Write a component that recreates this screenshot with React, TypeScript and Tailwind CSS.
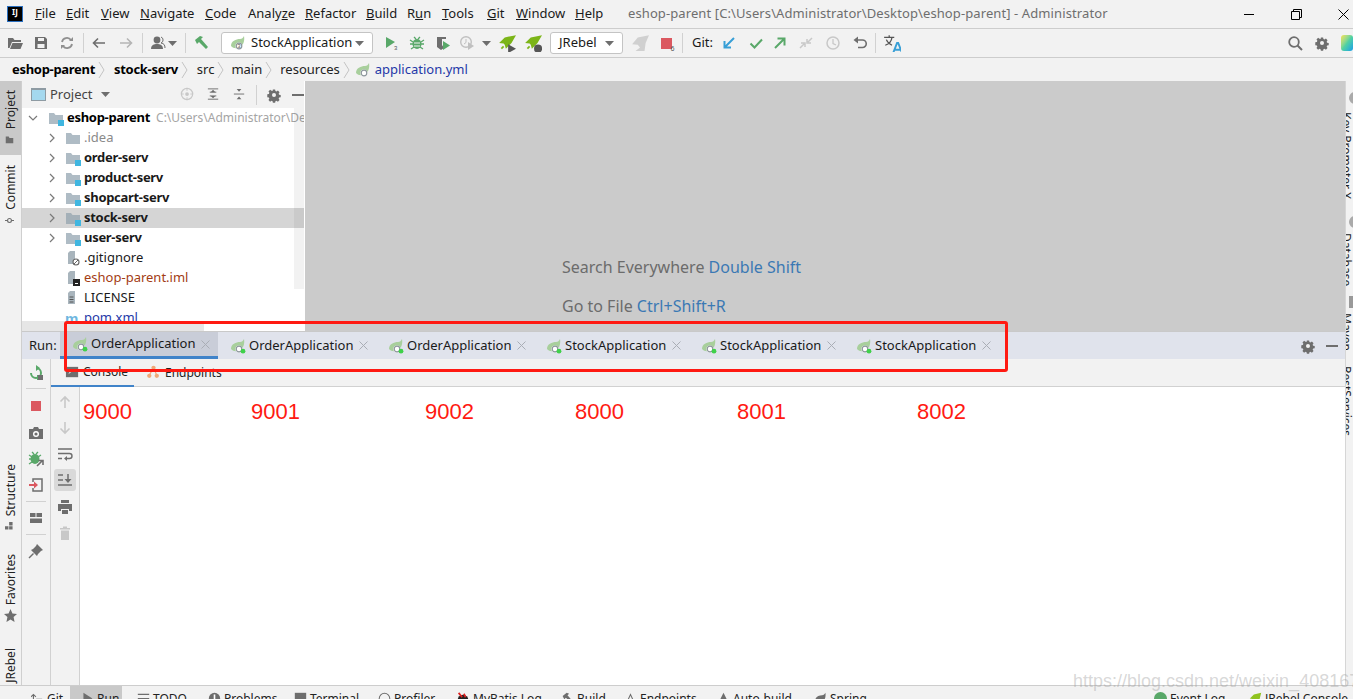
import type { ReactNode } from 'react';

const GRAY = '#6e6e6e';
const GREEN = '#59a869';
const BLUE = '#389fd6';
const RED = '#db5860';

function Ico({ size = 16, children }: { size?: number; children: ReactNode }) {
  return (
    <svg width={size} height={size} viewBox="0 0 16 16" className="shrink-0">
      {children}
    </svg>
  );
}

function Slot({ className = '', children }: { className?: string; children: ReactNode }) {
  return <div className={`w-[26px] h-[26px] flex items-center justify-center shrink-0 ${className}`}>{children}</div>;
}

function Sep({ className = '' }: { className?: string }) {
  return <div className={`w-px h-[20px] bg-[#d1d1d1] shrink-0 ${className}`} />;
}

function Caret({ className = '' }: { className?: string }) {
  return (
    <svg width="9" height="5" viewBox="0 0 9 5" className={`shrink-0 ${className}`}>
      <path d="M0 0h9L4.5 5z" fill={GRAY} />
    </svg>
  );
}

function Leaf({ dot, badge, size = 16 }: { dot?: boolean; badge?: string; size?: number }) {
  return (
    <Ico size={size}>
      <path d="M1 11C1 6 6 4 10 4c2 0 3-1 4-3 1 5-1 11-6 12-3 .6-5 0-7-2z" fill="#a8cf9c" />
      <circle cx="9" cy="11" r="3.6" fill="#fff" />
      <circle cx="9" cy="11" r="2.8" fill="none" stroke="#8d969c" strokeWidth="1.2" />
      {dot && <circle cx="13" cy="13.2" r="2.4" fill="#3fd14a" />}
      {badge && (
        <text x="9" y="13" fontSize="6" textAnchor="middle" fill="#555" fontFamily="Liberation Sans">
          {badge}
        </text>
      )}
    </Ico>
  );
}

function Rocket({ tail }: { tail?: 'run' | 'bug' }) {
  return (
    <Ico size={18}>
      <path d="M16 1L6 3 1 8l4 .5 1 1L7 13l5-5z" fill="#7cb518" />
      <path d="M3 13l2-2" stroke="#7cb518" strokeWidth="1.5" />
      {tail === 'run' && <path d="M9 9l7 4-7 4z" fill="#555" />}
      {tail === 'bug' && <circle cx="12.5" cy="13" r="3.6" fill="#555" />}
    </Ico>
  );
}

function Gear({ size = 16 }: { size?: number }) {
  return (
    <Ico size={size}>
      <path
        d="M6.6 1h2.8l.4 2 1.3.6 1.8-1.1 2 2-1.1 1.8.6 1.3 2 .4v2.8l-2 .4-.6 1.3 1.1 1.8-2 2-1.8-1.1-1.3.6-.4 2H6.6l-.4-2-1.3-.6-1.8 1.1-2-2 1.1-1.8-.6-1.3-2-.4V7l2-.4.6-1.3L1.1 3.5l2-2 1.8 1.1L6.2 3z"
        transform="translate(1.6 1.6) scale(.8)"
        fill={GRAY}
      />
      <circle cx="8" cy="8" r="2" fill="#f2f2f2" />
    </Ico>
  );
}

function Folder({ module, dark }: { module?: boolean; dark?: boolean }) {
  return (
    <Ico>
      <path d="M1 3h5l1.5 2H15v9H1z" fill={dark ? '#a4b0b8' : '#afbcc5'} />
      {module && <rect x="10" y="10" width="6" height="6" fill="#40b6e0" />}
    </Ico>
  );
}

function FileIco({ kind }: { kind: 'ignore' | 'iml' | 'text' }) {
  return (
    <Ico>
      <path d="M5 1h5v13H3V3z" fill="#a9b5bd" />
      {kind === 'ignore' && <circle cx="11" cy="12" r="3" fill="#fff" stroke="#666" strokeWidth="1.1" />}
      {kind === 'ignore' && <path d="M9 14l4-4" stroke="#666" />}
      {kind === 'iml' && <rect x="8" y="9" width="7" height="7" fill="#222" />}
      {kind === 'iml' && <rect x="10" y="13" width="3" height="1" fill="#fff" />}
      {kind === 'text' && <path d="M4.5 7h4M4.5 9.5h4M4.5 12h4" stroke="#555" />}
    </Ico>
  );
}

function Chevron({ open }: { open?: boolean }) {
  return (
    <svg width="10" height="10" viewBox="0 0 10 10" className="shrink-0">
      <path d={open ? 'M1 3l4 4 4-4' : 'M3 1l4 4-4 4'} fill="none" stroke="#7a7a7a" strokeWidth="1.2" />
    </svg>
  );
}

function Crumb({ children, className = '', sep = true }: { children: ReactNode; className?: string; sep?: boolean }) {
  return (
    <>
      <span className={className}>{children}</span>
      {sep && (
        <svg width="7" height="20" viewBox="0 0 7 20" className="shrink-0">
          <path d="M1 2l5 8-5 8" fill="none" stroke="#c4c4c4" />
        </svg>
      )}
    </>
  );
}

function VText({ children, className = '' }: { children: ReactNode; className?: string }) {
  return <span className={`[writing-mode:vertical-rl] rotate-180 text-[12px] leading-[14px] text-[#222] ${className}`}>{children}</span>;
}

const menus: [string, number, string][] = [
  ['File', 0, 'w-[31px]'],
  ['Edit', 0, 'w-[35px]'],
  ['View', 0, 'w-[39px]'],
  ['Navigate', 0, 'w-[65px]'],
  ['Code', 0, 'w-[43px]'],
  ['Analyze', 5, 'w-[57px]'],
  ['Refactor', 0, 'w-[61px]'],
  ['Build', 0, 'w-[41px]'],
  ['Run', 1, 'w-[35px]'],
  ['Tools', 0, 'w-[45px]'],
  ['Git', 0, 'w-[29px]'],
  ['Window', 0, 'w-[59px]'],
  ['Help', 0, 'w-[50px]'],
];

function TitleBar() {
  return (
    <div className="h-[29px] shrink-0 flex items-center border-b border-[#cdcdcd] bg-[#f2f2f2] text-[13px] text-[#1a1a1a]">
      <div className="ml-[7px] mr-[12px] w-[16px] h-[16px] bg-black border border-[#2a6fc0] flex items-start justify-center shrink-0">
        <span className="text-white text-[8px] leading-[10px] font-bold">IJ</span>
      </div>
      {menus.map(([label, idx, w]) => (
        <span key={label} className={`${w} shrink-0`}>
          {label.slice(0, idx)}
          <span className="underline">{label[idx]}</span>
          {label.slice(idx + 1)}
        </span>
      ))}
      <span className="ml-[3px] text-[#6e6e6e] tracking-[0.1px] whitespace-nowrap">
        eshop-parent [C:\Users\Administrator\Desktop\eshop-parent] - Administrator
      </span>
      <div className="ml-auto flex items-center">
        <div className="w-[10px] h-px bg-black mr-[37px]" />
        <svg width="11" height="11" viewBox="0 0 11 11" className="mr-[36px]">
          <path d="M.5 2.5h8v8h-8zM2.5 2.5v-2h8v8h-2" fill="none" stroke="#000" />
        </svg>
        <svg width="11" height="11" viewBox="0 0 11 11" className="mr-[4px]">
          <path d="M.5.5l10 10M10.5.5l-10 10" stroke="#000" />
        </svg>
      </div>
    </div>
  );
}

function Toolbar() {
  return (
    <div className="h-[29px] shrink-0 flex items-center pl-[2px] border-b border-[#cdcdcd] bg-[#f2f2f2] text-[13px] text-[#1a1a1a] overflow-hidden">
      <Slot><Ico><path d="M1 3h5l1.5 2H14v2H5L2.5 13H1zM5.5 8H16l-2.5 6H3z" fill={GRAY} /></Ico></Slot>
      <Slot><Ico><path d="M2 2h10l2 2v10H2zM5 3v3h6V3zM4.5 9v4h7V9z" fill={GRAY} fillRule="evenodd" /></Ico></Slot>
      <Slot><Ico><path d="M3 7a5 5 0 0 1 9-2M13 9a5 5 0 0 1-9 2" fill="none" stroke="#8f8f8f" strokeWidth="1.8" /><path d="M14 2v4h-4zM2 14v-4h4z" fill="#8f8f8f" /></Ico></Slot>
      <Sep className="ml-[3px]" />
      <Slot className="ml-[2px]"><Ico><path d="M14 8H3M7 3.5L2.5 8 7 12.5" fill="none" stroke={GRAY} strokeWidth="1.6" /></Ico></Slot>
      <Slot className="ml-px"><Ico><path d="M2 8h11M9 3.5L13.5 8 9 12.5" fill="none" stroke="#b5b5b5" strokeWidth="1.6" /></Ico></Slot>
      <Sep className="ml-[3px]" />
      <Slot className="ml-[2px]"><Ico><circle cx="7" cy="5" r="3.4" fill={GRAY} /><path d="M1 14c0-4 3-5 6-5s6 1 6 5z" fill={GRAY} /><path d="M11 2a3.2 3.2 0 0 1 0 6c3 .5 4 2 4 5" fill="none" stroke={GRAY} /></Ico></Slot>
      <Caret className="-ml-[3px]" />
      <Sep className="ml-[8px]" />
      <Slot className="ml-[2px]"><Ico><path d="M2 5l5-4 3 1-2 2 7 8-2 2-7-7-2 2z" fill={GREEN} /></Ico></Slot>
      <div className="ml-[7px] w-[152px] h-[22px] shrink-0 bg-white border border-[#c4c4c4] rounded-[3px] flex items-center pl-[8px]">
        <Leaf badge="3" />
        <span className="ml-[5px] whitespace-nowrap">StockApplication</span>
        <Caret className="ml-auto mr-[8px]" />
      </div>
      <Slot className="ml-[5px]"><Ico><path d="M3 2l9 5-9 6z" fill={GREEN} /><text x="11" y="15" fontSize="6" fill="#555" fontFamily="Liberation Sans">3</text></Ico></Slot>
      <Slot><Ico><ellipse cx="8" cy="9" rx="4.5" ry="5" fill={GREEN} /><path d="M1 5l3 2M15 5l-3 2M1 9h3M15 9h-3M2 14l3-2M14 14l-3-2M5 2l2 2M11 2L9 4" stroke={GREEN} strokeWidth="1.3" /><path d="M5 8h6M5 11h6" stroke="#f2f2f2" /></Ico></Slot>
      <Slot><Ico><path d="M2 2h9v2H7v6l2 3-3 2-4-3z" fill={GRAY} /><path d="M8 6l7 4.5L8 15z" fill={GREEN} /></Ico></Slot>
      <Slot className="-ml-[2px]"><Ico><circle cx="7" cy="7" r="5.3" fill="none" stroke="#c0c0c0" strokeWidth="1.4" /><path d="M7 4v3.5L5 9" fill="none" stroke="#c0c0c0" /><path d="M9 7l6 4-6 4z" fill="#c0c0c0" /></Ico></Slot>
      <Caret className="ml-[2px]" />
      <Slot className="ml-[3px]"><Rocket tail="run" /></Slot>
      <Slot><Rocket tail="bug" /></Slot>
      <div className="ml-[4px] w-[73px] h-[22px] shrink-0 bg-white border border-[#c4c4c4] rounded-[3px] flex items-center pl-[8px]">
        <span>JRebel</span>
        <Caret className="ml-auto mr-[8px]" />
      </div>
      <Slot className="ml-[4px]"><Ico size={18}><path d="M16 1L6 3 1 9l5 .5L8 12l-4 3h8l1-7z" fill="#d0d0d0" /></Ico></Slot>
      <Slot><div className="relative w-[11px] h-[11px] bg-[#db5860]"><span className="absolute -right-[3px] -bottom-[3px] text-[7px] leading-[7px] text-[#555]">6</span></div></Slot>
      <Sep className="ml-[3px]" />
      <span className="ml-[9px] w-[21px] shrink-0">Git:</span>
      <Slot className="ml-[3px]"><Ico><path d="M13 3L4 12M3.5 6v6.5H10" fill="none" stroke={BLUE} strokeWidth="2" /></Ico></Slot>
      <Slot className="ml-px"><Ico><path d="M2.5 8.5L6.5 12.5 14 4.5" fill="none" stroke={GREEN} strokeWidth="2" /></Ico></Slot>
      <Slot className="-ml-[2px]"><Ico><path d="M3 13l9-9M5.5 3.5H12.5V10.5" fill="none" stroke={GREEN} strokeWidth="2" /></Ico></Slot>
      <Slot><Ico><path d="M2 13l4-4M3 8h4v4M14 3l-4 4M9 4v4h4" fill="none" stroke="#c8c8c8" strokeWidth="1.5" /></Ico></Slot>
      <Slot className="ml-px"><Ico><circle cx="8" cy="8" r="6" fill="none" stroke="#c8c8c8" strokeWidth="1.5" /><path d="M8 4v4.5l3 1.5" fill="none" stroke="#c8c8c8" strokeWidth="1.3" /></Ico></Slot>
      <Slot className="ml-px"><Ico><path d="M5 5h5.5a3.5 3.5 0 0 1 0 7.5H6" fill="none" stroke={GRAY} strokeWidth="1.6" /><path d="M6 1.5v7L1.5 5z" fill={GRAY} /></Ico></Slot>
      <Sep className="ml-[2px]" />
      <Slot className="ml-[3px]"><Ico size={18}><path d="M1 3h9M5.5 1v2M8 3c-.5 4-3 6-6 7M3 5c1 3 3 4 5 5" fill="none" stroke="#555" strokeWidth="1.1" /><path d="M9 17l3.5-9h1l3.5 9M10.5 14h5" fill="none" stroke="#389fd6" strokeWidth="1.7" /></Ico></Slot>
      <Slot className="ml-auto"><Ico><circle cx="7" cy="7" r="4.8" fill="none" stroke={GRAY} strokeWidth="1.8" /><path d="M10.5 10.5L15 15" stroke={GRAY} strokeWidth="2" /></Ico></Slot>
      <Slot className="ml-px"><Gear /></Slot>
      <div className="ml-[6px] w-[12px] h-[16px] rounded-[3px] bg-gradient-to-br from-[#f4e24a] via-[#52d2a0] to-[#1e9be8] shrink-0" />
    </div>
  );
}

function Breadcrumb() {
  return (
    <div className="h-[23px] shrink-0 flex items-center gap-[3px] pl-[12px] bg-[#f2f2f2] text-[13px] text-[#222] whitespace-nowrap">
      <Crumb className="font-bold text-black tracking-[-0.3px]">eshop-parent</Crumb>
      <Crumb className="ml-[6px] font-bold text-black tracking-[-0.3px]">stock-serv</Crumb>
      <Crumb className="ml-[6px]">src</Crumb>
      <Crumb className="ml-[4px]">main</Crumb>
      <Crumb className="ml-[5px]">resources</Crumb>
      <div className="ml-[2px]"><Leaf /></div>
      <span className="ml-px text-[#2438a8]">application.yml</span>
    </div>
  );
}

function Row({ indent, chevron, icon, selected, children }: { indent: string; chevron?: boolean; icon: ReactNode; selected?: boolean; children: ReactNode }) {
  return (
    <div className={`h-[20px] shrink-0 flex items-center whitespace-nowrap ${indent} ${selected ? 'bg-[#d5d5d5]' : ''}`}>
      <div className="w-[18px] shrink-0 flex justify-start">{chevron && <Chevron />}</div>
      {icon}
      <span className="ml-[3px]">{children}</span>
    </div>
  );
}

function ProjectPanel() {
  return (
    <div className="w-[283px] shrink-0 flex flex-col bg-white border-r border-transparent">
      <div className="h-[27px] shrink-0 bg-[#f2f2f2] flex items-center pl-[9px] text-[13px] text-[#444]">
        <div className="w-[15px] h-[13px] bg-[#a4d8ee] border border-[#8e9ba3] border-t-2 shrink-0" />
        <span className="ml-[4px]">Project</span>
        <Caret className="ml-[9px]" />
        <div className="ml-[70px]"><Ico size={15}><circle cx="7.5" cy="7.5" r="6" fill="none" stroke="#c8c8c8" strokeWidth="1.3" /><circle cx="7.5" cy="7.5" r="2" fill="#c8c8c8" /><path d="M7.5 1v3M7.5 11v3M1 7.5h3M11 7.5h3" stroke="#c8c8c8" /></Ico></div>
        <div className="ml-[11px]"><Ico size={15}><path d="M2 2h11M2 13h11M4 9.5h7M4 5.5h7" stroke={GRAY} /><path d="M7.5 3l2.5 2.5H5zM7.5 12L5 9.5h5z" fill={GRAY} /></Ico></div>
        <div className="ml-[11px]"><Ico size={15}><path d="M2 7.5h11" stroke={GRAY} /><path d="M5 2l2.5 3L10 2zM5 13l2.5-3 2.5 3z" fill={GRAY} /></Ico></div>
        <div className="ml-[9px] w-px h-[20px] bg-[#d1d1d1]" />
        <div className="ml-[9px]"><Gear /></div>
        <div className="ml-[10px] w-[12px] h-[2px] bg-[#6e6e6e]" />
      </div>
      <div className="relative flex-1 flex flex-col overflow-hidden text-[13px] text-[#1a1a1a]">
        <Row indent="pl-[8px]" icon={<Folder module />}>
          <span className="font-bold text-black tracking-[-0.3px]">eshop-parent</span>
          <span className="ml-[6px] text-[12px] text-[#a5a5a5]">C:\Users\Administrator\Desktop\eshop-parent</span>
        </Row>
        <div className="absolute left-[6px] top-[5px]"><Chevron open /></div>
        <Row indent="pl-[25px]" chevron icon={<Folder />}><span className="text-[#8a8a8a]">.idea</span></Row>
        <Row indent="pl-[25px]" chevron icon={<Folder module />}><b className="tracking-[-0.3px]">order-serv</b></Row>
        <Row indent="pl-[25px]" chevron icon={<Folder module />}><b className="tracking-[-0.3px]">product-serv</b></Row>
        <Row indent="pl-[25px]" chevron icon={<Folder module />}><b className="tracking-[-0.3px]">shopcart-serv</b></Row>
        <Row indent="pl-[25px]" chevron selected icon={<Folder module dark />}><b className="tracking-[-0.3px]">stock-serv</b></Row>
        <Row indent="pl-[25px]" chevron icon={<Folder module />}><b className="tracking-[-0.3px]">user-serv</b></Row>
        <Row indent="pl-[25px]" icon={<FileIco kind="ignore" />}>.gitignore</Row>
        <Row indent="pl-[25px]" icon={<FileIco kind="iml" />}><span className="text-[#a33c14]">eshop-parent.iml</span></Row>
        <Row indent="pl-[25px]" icon={<FileIco kind="text" />}>LICENSE</Row>
        <Row indent="pl-[25px]" icon={<Ico><text x="0" y="14" fontSize="15" fontWeight="700" fill="#6fb7e0" fontFamily="Liberation Sans">m</text></Ico>}><span className="text-[#2438a8]">pom.xml</span></Row>
        <div className="absolute right-0 top-0 w-[10px] h-[181px] bg-black/5" />
      </div>
      <div className="h-[10px] shrink-0 bg-white">
        <div className="w-[182px] h-full bg-[#e6e6e6]" />
      </div>
    </div>
  );
}

function Editor() {
  return (
    <div className="flex-1 bg-[#cbcbcb] pl-[257px] pt-[174px] text-[16px] leading-[24px] text-[#6c6c6c]">
      <p>Search Everywhere <span className="text-[#3b79b4]">Double Shift</span></p>
      <p className="mt-[15px]">Go to File <span className="text-[#3b79b4]">Ctrl+Shift+R</span></p>
    </div>
  );
}

const runTabs: [string, string, boolean][] = [
  ['OrderApplication', 'w-[158px] pl-[12px]', true],
  ['OrderApplication', 'w-[158px] pl-[12px]', false],
  ['OrderApplication', 'w-[158px] pl-[12px]', false],
  ['StockApplication', 'w-[155px] pl-[12px]', false],
  ['StockApplication', 'w-[155px] pl-[12px]', false],
  ['StockApplication', 'w-[155px] pl-[12px]', false],
];

function RunTabs() {
  return (
    <div className="h-[28px] shrink-0 flex items-stretch bg-[#e0e3ec] border-t border-[#c9c9c9] text-[13px] text-[#1a1a1a]">
      <span className="w-[38px] shrink-0 pl-[7px] self-center">Run:</span>
      {runTabs.map(([name, w, active], i) => (
        <div key={i} className={`${w} shrink-0 flex items-center whitespace-nowrap ${active ? 'bg-[#c9cdd8] border-b-[3px] border-[#4083c9]' : ''}`}>
          <Leaf dot />
          <span className="ml-[3px]">{name}</span>
          <svg width="9" height="9" viewBox="0 0 9 9" className="ml-[6px] shrink-0">
            <path d="M.5.5l8 8M8.5.5l-8 8" stroke="#a9adb5" />
          </svg>
        </div>
      ))}
      <div className="ml-auto flex items-center pr-[7px]">
        <Gear />
        <div className="ml-[10px] w-[12px] h-[2px] bg-[#6e6e6e]" />
      </div>
    </div>
  );
}

function SideButton({ children, className = '' }: { children: ReactNode; className?: string }) {
  return <div className={`h-[26px] w-full flex items-center justify-center shrink-0 ${className}`}>{children}</div>;
}

function RunActions() {
  return (
    <div className="w-[29px] shrink-0 flex flex-col items-center pt-[1px] border-r border-[#d1d1d1] bg-[#f2f2f2]">
      <SideButton><Ico><path d="M3 8a5 5 0 1 0 5-5" fill="none" stroke={GREEN} strokeWidth="2" /><path d="M8 0l4 3-4 3zM9 10h5v5H9z" fill={GREEN} /><rect x="10" y="10" width="5" height="5" fill={GRAY} /></Ico></SideButton>
      <div className="w-[20px] h-px bg-[#d1d1d1] my-[2px]" />
      <SideButton className="mt-[2px]"><div className="w-[10px] h-[10px] bg-[#db5860]" /></SideButton>
      <SideButton className="mt-px"><Ico><path d="M1 4h4l1-2h4l1 2h4v10H1z" fill={GRAY} /><circle cx="8" cy="9" r="3" fill="#fff" /><circle cx="8" cy="9" r="1.6" fill={GRAY} /></Ico></SideButton>
      <SideButton><Ico><ellipse cx="7" cy="8" rx="4.5" ry="5" fill={GREEN} /><path d="M1 4l3 2M13 4l-3 2M1 8h3M1 13l3-2M4 1l2 2M10 1L8 3" stroke={GREEN} strokeWidth="1.3" /><path d="M9 15l5-5M10.5 9.5H15V14" fill="none" stroke={GRAY} strokeWidth="1.6" /></Ico></SideButton>
      <SideButton><Ico><path d="M5 5V2h9v12H5v-3" fill="none" stroke={GRAY} strokeWidth="1.5" /><path d="M1 7.5h6M1 8.5h6" stroke={RED} strokeWidth="1.2" /><path d="M6 4.5L10 8l-4 3.5z" fill={RED} /></Ico></SideButton>
      <div className="w-[20px] h-px bg-[#d1d1d1] mt-[3px] mb-[3px]" />
      <SideButton><Ico><path d="M2 3h5.5v4H2zM8.5 3H14v4H8.5zM2 8.5h12V13H2z" fill={GRAY} /></Ico></SideButton>
      <div className="w-[20px] h-px bg-[#d1d1d1] mt-[3px] mb-[3px]" />
      <SideButton><Ico><path d="M9 1l6 6-2 1-3 3-1 2-6-6 2-1 3-3z" fill={GRAY} /><path d="M5.5 10.5L1 15" stroke={GRAY} strokeWidth="1.5" /></Ico></SideButton>
    </div>
  );
}

function ConsoleActions() {
  return (
    <div className="w-[29px] shrink-0 flex flex-col items-center pt-[2px] border-r border-[#d1d1d1] bg-[#f2f2f2]">
      <SideButton><Ico><path d="M8 14V3M3.5 7.5L8 3l4.5 4.5" fill="none" stroke="#c8c8c8" strokeWidth="1.6" /></Ico></SideButton>
      <SideButton><Ico><path d="M8 2v11M3.5 8.5L8 13l4.5-4.5" fill="none" stroke="#c8c8c8" strokeWidth="1.6" /></Ico></SideButton>
      <SideButton><Ico><path d="M1 3h14M1 7.5h11.5a2.5 2.5 0 0 1 0 5H9M1 12.5h4" fill="none" stroke={GRAY} strokeWidth="1.4" /><path d="M10 10v5l-3-2.5z" fill={GRAY} /></Ico></SideButton>
      <div className="w-[22px] h-[22px] my-[2px] shrink-0 rounded-[3px] bg-[#d9d9d9] flex items-center justify-center">
        <Ico><path d="M1 3h5M1 8h5M1 13h14M11 2v7" fill="none" stroke={GRAY} strokeWidth="1.5" /><path d="M7.5 7h7L11 11z" fill={GRAY} /></Ico>
      </div>
      <SideButton className="mt-[1px]"><Ico><path d="M4 1h8v3H4zM1 5h14v7h-3v-2H4v2H1z" fill={GRAY} /><path d="M5 11h6v4H5z" fill={GRAY} /></Ico></SideButton>
      <SideButton><Ico><path d="M3 3h10v1.5H3zM6 1.5h4V3H6zM4 5.5h8V15H4z" fill="#c8c8c8" /></Ico></SideButton>
    </div>
  );
}

function RunPanel() {
  return (
    <div className="flex-1 flex flex-col min-h-0">
      <RunTabs />
      <div className="flex-1 flex min-h-0">
        <RunActions />
        <div className="flex-1 flex flex-col min-w-0">
          <div className="h-[28px] shrink-0 flex items-stretch bg-[#f2f2f2] border-b border-[#d1d1d1] text-[12px] text-[#222]">
            <div className="w-[83px] shrink-0 pl-[14px] flex items-center gap-[3px] border-b-[2px] border-[#4083c9] -mb-px">
              <Ico size={15}><rect x="1" y="2" width="13" height="11" fill={GRAY} /><path d="M4 5l2.5 2L4 9" fill="none" stroke="#fff" /></Ico>
              <span>Console</span>
            </div>
            <div className="ml-[12px] flex items-center gap-[4px]">
              <Ico size={15}><circle cx="3.5" cy="11.5" r="2.3" fill="#f0a878" /><circle cx="11.5" cy="11.5" r="2.3" fill="#f0a878" /><circle cx="8" cy="3" r="2.3" fill="#f0a878" /><path d="M3.5 11L8 3l3.5 8" fill="none" stroke="#f0a878" strokeWidth="1.3" /></Ico>
              <span>Endpoints</span>
            </div>
          </div>
          <div className="flex-1 flex min-h-0">
            <ConsoleActions />
            <div className="flex-1 bg-white flex items-start pl-[3px] pt-[12px] font-['Liberation_Sans',sans-serif] text-[22px] leading-[26px] text-[#ff1a12]">
              <span className="w-[168px] shrink-0">9000</span>
              <span className="w-[174px] shrink-0">9001</span>
              <span className="w-[150px] shrink-0">9002</span>
              <span className="w-[162px] shrink-0">8000</span>
              <span className="w-[180px] shrink-0">8001</span>
              <span className="w-[60px] shrink-0">8002</span>
            </div>
          </div>
        </div>
      </div>
    </div>
  );
}

function LeftStrip() {
  return (
    <div className="w-[22px] shrink-0 flex flex-col items-center border-r border-[#cfcfcf] bg-[#f2f2f2]">
      <div className="w-full h-[74px] shrink-0 bg-[#c9c9c9] flex flex-col items-center pt-[9px] gap-[6px]">
        <VText>Project</VText>
        <Ico size={12}><path d="M1 2h4l1 2h5v7H1z" fill={GRAY} /></Ico>
      </div>
      <div className="mt-[10px] flex flex-col items-center gap-[6px]">
        <VText>Commit</VText>
        <Ico size={12}><circle cx="6" cy="6" r="2.6" fill="none" stroke={GRAY} strokeWidth="1.5" /><path d="M0 6h3M9 6h3" stroke={GRAY} strokeWidth="1.5" /></Ico>
      </div>
      <div className="mt-[236px] flex flex-col items-center gap-[6px]">
        <VText>Structure</VText>
        <Ico size={11}><path d="M0 6h5v5H0zM6 6h5v5H6zM6 0h5v5H6z" fill={GRAY} /></Ico>
      </div>
      <div className="mt-[21px] flex flex-col items-center gap-[4px]">
        <VText>Favorites</VText>
        <Ico size={13}><path d="M8 0l2.4 5.4 5.6.6-4.2 3.8L13 16l-5-3-5 3 1.200-6.200L0 6l5.600-.6z" fill={GRAY} /></Ico>
      </div>
      <div className="mt-[26px] flex flex-col items-center gap-[3px]">
        <VText>JRebel</VText>
        <Ico size={14}><path d="M15 1L6 3 1 8l3 .5L2 13l5-2 1 2 5-5z" fill="#8fc31f" /><circle cx="11" cy="12.500" r="2.500" fill="#333" /></Ico>
      </div>
    </div>
  );
}

function RightStrip() {
  return (
    <div className="w-[8px] shrink-0 overflow-hidden border-l border-[#d6d6d6] bg-[#f2f2f2] flex flex-col text-[#222] text-[12px] leading-[14px] pl-[3px] pt-[11px]">
      <div className="w-[12px] h-[12px] shrink-0 rounded-full bg-[#aaa]" />
      <span className="[writing-mode:vertical-rl] mt-[8px] whitespace-nowrap h-[95px] shrink-0">Key Promoter X</span>
      <div className="w-[12px] h-[12px] shrink-0 rounded-full bg-[#aaa] mt-[9px]" />
      <span className="[writing-mode:vertical-rl] mt-[5px] whitespace-nowrap h-[60px] shrink-0">Database</span>
      <div className="w-[12px] h-[12px] shrink-0 bg-[#999] mt-[3px]" />
      <span className="[writing-mode:vertical-rl] mt-[5px] whitespace-nowrap h-[50px] shrink-0">Maven</span>
      <span className="[writing-mode:vertical-rl] mt-[3px] whitespace-nowrap">RestServices</span>
    </div>
  );
}

const bottomItems: [string, string, ReactNode, string][] = [
  ['w-[46px]', 'w-[23px]', <Ico size={13}><path d="M3 15V3M0 6l3-3 3 3M7 15h6V9H7z" fill="none" stroke={GRAY} strokeWidth="1.4" /></Ico>, 'Git'],
  ['w-[52px]', 'w-[27px]', <Ico size={13}><path d="M3 1l11 7-11 7z" fill={GRAY} /></Ico>, 'Run'],
  ['w-[78px]', 'w-[31px]', <Ico size={13}><path d="M1 3h14M1 8h14M1 13h14" stroke={GRAY} strokeWidth="1.4" /></Ico>, 'TODO'],
  ['w-[90px]', 'w-[24px]', <Ico size={13}><circle cx="8" cy="8" r="7" fill={GRAY} /><path d="M8 3v6" stroke="#fff" strokeWidth="2" /></Ico>, 'Problems'],
  ['w-[82px]', 'w-[20px]', <Ico size={13}><rect x="1" y="1" width="14" height="14" fill={GRAY} /></Ico>, 'Terminal'],
  ['w-[83px]', 'w-[22px]', <Ico size={13}><circle cx="8" cy="8" r="6.500" fill="none" stroke={GRAY} strokeWidth="1.3" /></Ico>, 'Profiler'],
  ['w-[100px]', 'w-[18px]', <Ico size={14}><circle cx="8" cy="9" r="6" fill="#222" /><path d="M3 1l4 5M9 2l2 4" stroke="#d22" strokeWidth="2" /></Ico>, 'MyBatis Log'],
  ['w-[67px]', 'w-[22px]', <Ico size={13}><path d="M2 5l5-4 3 1-2 2 7 8-2 2-7-7-2 2z" fill={GRAY} /></Ico>, 'Build'],
  ['w-[90px]', 'w-[18px]', <Ico size={13}><path d="M3 14L8 3l5 11" fill="none" stroke={GRAY} strokeWidth="1.300" /></Ico>, 'Endpoints'],
  ['w-[98px]', 'w-[21px]', <Ico size={13}><path d="M8 1l7 14H1z" fill={GRAY} /></Ico>, 'Auto-build'],
  ['w-[340px]', 'w-[20px]', <Ico size={13}><path d="M1 12C1 6 6 4 10 4c2 0 3-1 4-3 1 5-1 11-6 12-3 .6-5 0-7-1z" fill={GRAY} /></Ico>, 'Spring'],
  ['w-[95px]', 'w-[20px]', <Ico size={13}><circle cx="8" cy="8" r="8" fill={GREEN} /></Ico>, 'Event Log'],
  ['w-[108px]', 'w-[20px]', <Ico size={13}><path d="M15 1L6 3 1 8l3 .5L2 14l5-2 1 2 5-5z" fill="#8fc31f" /></Ico>, 'JRebel Console'],
];

function BottomBar() {
  return (
    <div className="h-[14px] shrink-0 flex items-start pl-[24px] border-t border-[#cdcdcd] bg-[#f2f2f2] text-[12px] leading-[16px] text-[#222] whitespace-nowrap">
      {bottomItems.map(([w, slot, icon, label]) => (
        <div key={label} className={`${w} shrink-0 h-[26px] flex items-start pt-[5px] ${label === 'Run' ? 'bg-[#c9c9c9]' : ''}`}>
          <div className={`${slot} shrink-0 flex justify-end pr-[3px] pt-px`}>{icon}</div>
          <span>{label}</span>
        </div>
      ))}
    </div>
  );
}

export default function App() {
  return (
    <div className="relative w-[1353px] h-[699px] overflow-hidden flex flex-col bg-[#f2f2f2] font-['Noto_Sans',sans-serif]">
      <TitleBar />
      <Toolbar />
      <Breadcrumb />
      <div className="flex-1 flex min-h-0">
        <LeftStrip />
        <div className="flex-1 flex flex-col min-w-0">
          <div className="h-[250px] shrink-0 flex">
            <ProjectPanel />
            <Editor />
          </div>
          <RunPanel />
        </div>
        <RightStrip />
      </div>
      <BottomBar />
      {/* annotation drawn over the screenshot */}
      <div className="absolute left-[64px] top-[321px] w-[944px] h-[51px] border-[3px] border-[#ff1a12] rounded-[3px]" />
      <div className="absolute left-[1015px] bottom-[1028px] w-[10px] h-[4px] bg-[#f08030]" />
      <div className="absolute left-[1073px] top-[670px] font-['Liberation_Sans',sans-serif] text-[18px] leading-[22px] text-[#9a9a9a]/40 whitespace-nowrap">
        https://blog.csdn.net/weixin_40816738
      </div>
    </div>
  );
}
